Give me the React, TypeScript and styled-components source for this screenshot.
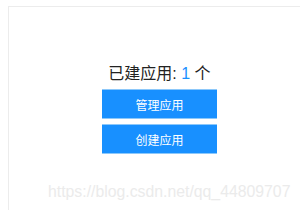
import React from 'react';
import styled, { createGlobalStyle } from 'styled-components';

const GlobalStyle = createGlobalStyle`
  html, body {
    margin: 0;
    padding: 0;
    background: #ffffff;
    overflow: hidden;
  }
  body {
    font-family: "Liberation Sans", "Noto Sans CJK SC", sans-serif;
  }
`;

const Page = styled.div`
  position: relative;
  width: 300px;
  height: 210px;
  overflow: hidden;
`;

const Frame = styled.div`
  margin: 6px 0 0 8px;
  height: 220px;
  border-top: 1px solid #ececec;
  border-left: 1px solid #ececec;
  padding: 56px 0 0 10px;
  display: flex;
  flex-direction: column;
  align-items: center;
`;

const Summary = styled.div`
  font-size: 16px;
  line-height: 22px;
  color: #222;
  margin-bottom: 4px;
`;

const Count = styled.span`
  color: #1890ff;
`;

const Actions = styled.div`
  display: flex;
  flex-direction: column;
  gap: 5px;
`;

const ActionButton = styled.button`
  width: 115px;
  height: 30px;
  padding: 0;
  background: #1890ff;
  border: none;
  border-top: 1px solid #8cc8fa;
  border-bottom: 1px solid #8cc8fa;
  color: #fff;
  font-family: "Noto Sans CJK SC", sans-serif;
  font-size: 12px;
  cursor: pointer;
`;

const Watermark = styled.div`
  position: absolute;
  left: 48px;
  top: 181px;
  font-family: "Liberation Sans", sans-serif;
  font-size: 15.8px;
  line-height: 22px;
  color: #ebebeb;
  white-space: nowrap;
  pointer-events: none;
`;

export default function App() {
  return (
    <Page>
      <GlobalStyle />
      <Frame>
        <Summary>
          已建应用: <Count>1</Count> 个
        </Summary>
        <Actions>
          <ActionButton>管理应用</ActionButton>
          <ActionButton>创建应用</ActionButton>
        </Actions>
      </Frame>
      <Watermark>https://blog.csdn.net/qq_44809707</Watermark>
    </Page>
  );
}
